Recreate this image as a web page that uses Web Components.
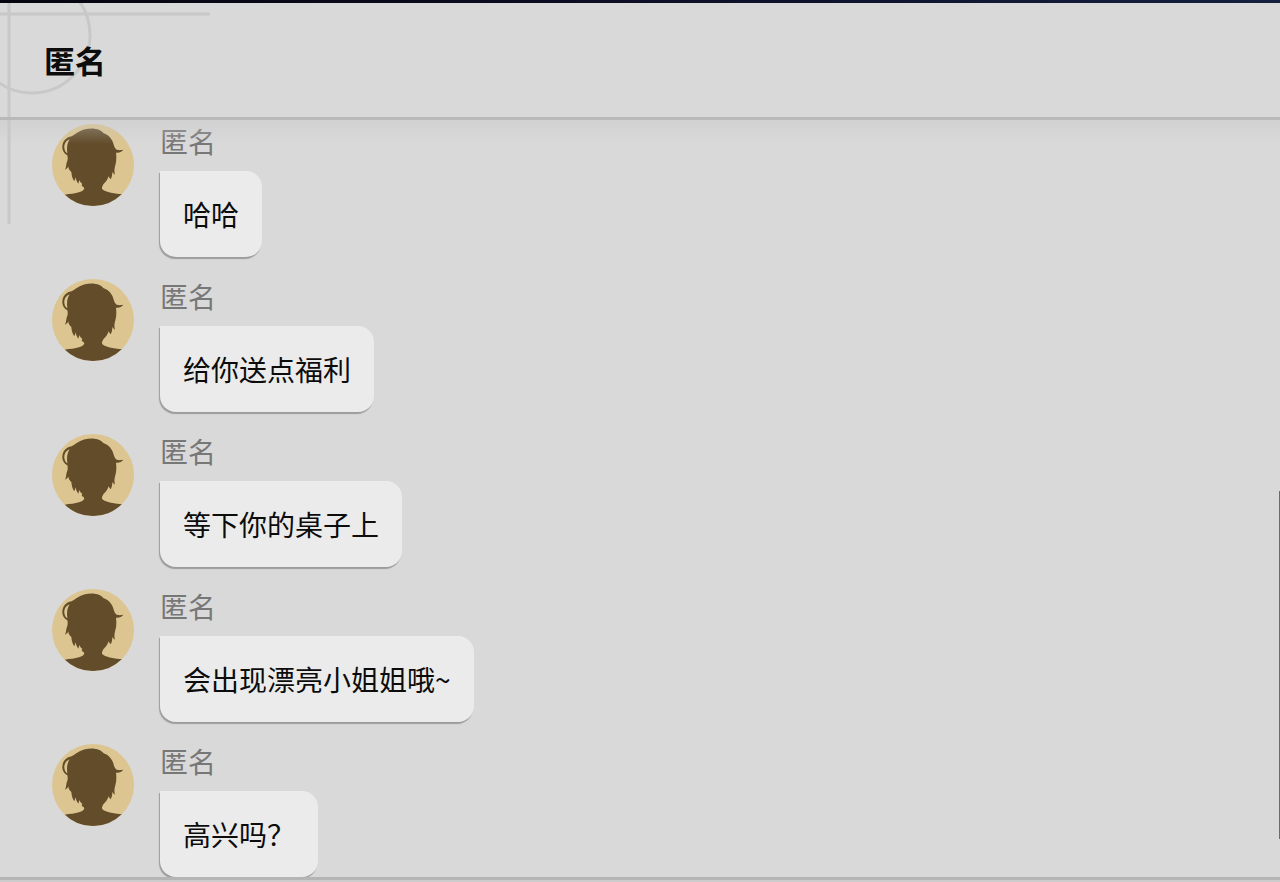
<!DOCTYPE html>
<html lang="zh-CN">
<head>
<meta charset="utf-8">
<meta name="viewport" content="width=device-width, initial-scale=1">
<title>匿名</title>
<style>
  html, body { margin: 0; background: #d9d9d9; }
  body { font-family: "Noto Sans CJK SC", "Noto Sans", sans-serif; color: #0c0c0c; }
</style>
</head>
<body>
<chat-window>
  <chat-header slot="header">匿名</chat-header>
  <chat-message name="匿名">哈哈</chat-message>
  <chat-message name="匿名">给你送点福利</chat-message>
  <chat-message name="匿名">等下你的桌子上</chat-message>
  <chat-message name="匿名">会出现漂亮小姐姐哦~</chat-message>
  <chat-message name="匿名">高兴吗？</chat-message>
</chat-window>

<template id="window-template">
  <style>
    :host { display: flex; flex-direction: column; height: 100vh; position: relative; overflow: hidden; background: #d9d9d9; }
    .strip { flex: none; height: 3px; background: linear-gradient(90deg, #05050f, #0b0b20 40%, #14203f); }
    .ornament { position: absolute; left: 0; top: 3px; width: 220px; height: 224px; pointer-events: none; }
    main { flex: 1; min-height: 0; position: relative; overflow: hidden; }
    main::before { content: ""; position: absolute; inset: 0 0 auto; height: 24px; z-index: 1; pointer-events: none;
      background: linear-gradient(rgba(200, 200, 200, .45), rgba(212, 212, 212, 0)); }
    .list { display: flex; flex-direction: column; gap: 22px; padding: 4px 52px 0; }
    .thumb { position: absolute; right: 0; top: 49%; bottom: 5%; width: 1px; background: #6b6b6b; }
    footer { flex: none; height: 2px; border-top: 3px solid #b5b5b5; background: #cccccc; }
  </style>
  <div class="strip"></div>
  <svg class="ornament" viewBox="0 0 220 224" fill="none" stroke="#c8c8c8" stroke-width="3" aria-hidden="true">
    <path d="M0 11H210M9 0V221"/>
    <circle cx="32" cy="32" r="58"/>
  </svg>
  <slot name="header"></slot>
  <main><div class="list"><slot></slot></div><div class="thumb"></div></main>
  <footer></footer>
</template>

<template id="header-template">
  <style>
    :host { display: block; flex: none; position: relative; border-bottom: 3px solid #b9b9b9; }
    h1 { margin: 0; padding: 35px 44px; font-size: 31px; line-height: 44px; font-weight: 700; }
  </style>
  <h1><slot></slot></h1>
</template>

<template id="avatar-template">
  <style>
    :host { display: block; width: 82px; height: 82px; border-radius: 50%; overflow: hidden; background: #dcc590; }
    svg { display: block; width: 100%; height: 100%; }
  </style>
  <svg viewBox="-24 -3 246 246" role="img" aria-label="头像">
    <path fill="#624c2a" d="M50 24C66 14 82 10 103 11C116 12 126 18 131 25C147 30 158 44 162 62C165 70 168 74 174 75C179 76 184 75 190 74C185 81 178 84 168 83C170 98 169 110 166 121C163 131 162 139 165 149C161 146 158 143 157 140C157 148 156 156 152 163C149 160 147 157 146 154C143 164 137 172 130 178L128 182C125 187 125 192 130 195C137 199 147 202 157 204C166 206 176 207 186 208L196 250H6L14 209C30 207 46 206 57 202C66 199 72 196 73 190L70 185C65 185 64 181 67 176C62 173 60 170 58 165L55 176C50 170 48 164 47 157L43 169C37 161 35 151 34 141C29 137 25 131 25 124C23 129 20 132 15 134C20 125 17 117 22 107C24 101 23 96 22 91C13 87 8 78 7 69C6 52 16 37 35 34C40 31 45 28 50 24Z"/>
    <path fill="#dcc590" d="M29 43C17 48 12 58 13 69C14 77 17 82 22 85C20 68 21 54 29 43Z"/>
  </svg>
</template>

<template id="message-template">
  <style>
    :host { display: flex; align-items: flex-start; gap: 26px; }
    chat-avatar { flex: none; }
    .body { min-width: 0; display: flex; flex-direction: column; align-items: flex-start; gap: 13px; }
    .name { font-size: 28px; line-height: 34px; color: #777; }
    .bubble { margin: 0; padding: 22px 23px; font-size: 28px; line-height: 42px; background: #ebebeb;
      border-radius: 0 16px 16px 16px; box-shadow: -1px 2px 1px #9c9c9c; }
  </style>
  <chat-avatar></chat-avatar>
  <div class="body">
    <span class="name"></span>
    <p class="bubble"><slot></slot></p>
  </div>
</template>

<script>
  class TemplateElement extends HTMLElement {
    constructor() {
      super();
      const source = document.getElementById(this.constructor.template);
      this.attachShadow({ mode: "open" }).append(source.content.cloneNode(true));
    }
  }
  class ChatAvatar extends TemplateElement { static template = "avatar-template"; }
  class ChatHeader extends TemplateElement { static template = "header-template"; }
  class ChatMessage extends TemplateElement {
    static template = "message-template";
    static observedAttributes = ["name"];
    attributeChangedCallback(attribute, before, value) {
      this.shadowRoot.querySelector(".name").textContent = value;
    }
  }
  class ChatWindow extends TemplateElement { static template = "window-template"; }
  customElements.define("chat-avatar", ChatAvatar);
  customElements.define("chat-header", ChatHeader);
  customElements.define("chat-message", ChatMessage);
  customElements.define("chat-window", ChatWindow);
</script>
</body>
</html>
